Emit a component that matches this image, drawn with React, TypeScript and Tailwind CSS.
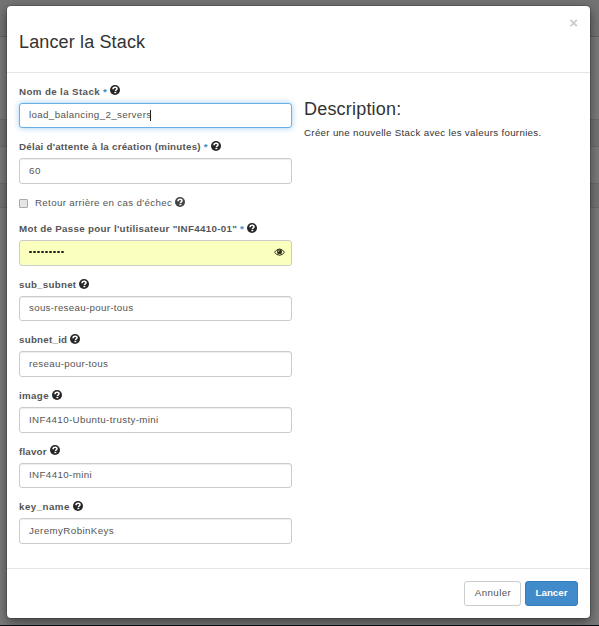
import type { ReactNode } from 'react';

function Help({ className = 'text-[#262626]' }: { className?: string }) {
  return (
    <svg viewBox="0 0 20 20" className={`inline-block h-[10px] w-[10px] shrink-0 ${className}`}>
      <circle cx="10" cy="10" r="10" fill="currentColor" />
      <path d="M6 8.400C6 5 7.800 4.500 10.200 4.500c2.400 0 3.800 1 3.800 3 0 2.400-3 2.200-3 4.500" fill="none" stroke="white" strokeWidth="3" />
      <rect x="8.800" y="13.600" width="3.800" height="2.800" fill="white" />
    </svg>
  );
}

function Eye() {
  return (
    <svg viewBox="0 0 22 16" className="h-[8px] w-[11px] text-[#2f2f22]">
      <path d="M1 8.500Q5.500 2 11 2T21 8.500Q16.500 14.500 11 14.500T1 8.500Z" fill="none" stroke="currentColor" strokeWidth="2" />
      <circle cx="11" cy="7.500" r="5" fill="currentColor" />
      <path d="M8.800 7.500Q8.800 5 11 5" fill="none" stroke="#faffbd" strokeWidth="1.400" />
    </svg>
  );
}

type FieldProps = {
  label: string;
  spacing: string;
  required?: boolean;
  height: string;
  boxHeight: string;
  box?: string;
  icon?: string;
  children: ReactNode;
};

function Field({
  label,
  spacing,
  required,
  height,
  boxHeight,
  box = 'border-[#cccccc] bg-white shadow-[inset_0_1px_1px_rgba(0,0,0,0.075)]',
  icon = 'mt-px ml-[3px]',
  children,
}: FieldProps) {
  return (
    <div className={height}>
      <div className="flex h-[18px] items-start whitespace-pre font-bold leading-[14px]">
        <span className={spacing}>{label}</span>
        {required && <span className="ml-[3px] text-[#428bca]">*</span>}
        <Help className={`text-[#262626] ${icon}`} />
      </div>
      <div className={`flex w-[273px] items-center rounded-[3px] border px-[9px] ${boxHeight} ${box}`}>{children}</div>
    </div>
  );
}

export default function App() {
  return (
    <div className="relative h-[626px] w-[599px] overflow-hidden bg-[#7b7b7b] font-['Liberation_Sans',Arial,sans-serif] text-[9.75px] text-[#555]">
      <div className="h-[37px] border-b border-[#626262] bg-[#747474]" />
      <div className="h-[82px]" />
      <div className="h-[28px] border-y border-[#6b6b6b] bg-[#747474]" />
      <div className="h-[36px]" />
      <div className="h-[25px] border-y border-[#6b6b6b] bg-[#747474]" />
      <div className="h-[417px]" />
      <div className="h-px bg-[#080b10]" />

      <div className="absolute left-[7px] top-[6px] flex h-[612px] w-[583px] flex-col rounded-[4px] bg-white shadow-[0_0_0_1px_rgba(0,0,0,0.15),0_4px_12px_rgba(0,0,0,0.5)]">
        <header className="flex h-[67px] shrink-0 justify-between border-b border-[#e5e5e5] pl-3 pr-[12px]">
          <h1 className="pt-[25px] text-[18px] leading-[22px] tracking-[0.14px] text-[#333]">Lancer la Stack</h1>
          <button className="mt-[9px] h-[16px] text-[15px] font-bold leading-[16px] text-[#cbcbcb]">×</button>
        </header>

        <main className="flex h-[496px] shrink-0 border-b border-[#e5e5e5] pl-3 pt-[12px]">
          <form className="w-[285px]">
            <Field label="Nom de la Stack" spacing="tracking-[0.38px]" required height="h-[55px]" boxHeight="h-[25px]" icon="ml-[3px]" box="border-[#66afe9] bg-white shadow-[0_0_6px_rgba(102,175,233,0.6)]">
              <span className="tracking-[0.36px]">load_balancing_2_servers</span>
              <span className="ml-[-1px] h-[11px] w-px bg-[#222]" />
            </Field>
            <Field label="Délai d'attente à la création (minutes)" spacing="tracking-[0.24px]" required height="h-[55px]" boxHeight="h-[26px]">
              <span className="tracking-[0.6px]">60</span>
            </Field>
            <div className="flex h-[27px] items-start leading-[14px]">
              <span className="mt-[4px] h-[9px] w-[9px] rounded-[1px] border border-[#aaa] bg-[#e5e5e5]" />
              <span className="ml-[7px] mt-px tracking-[0.33px]">Retour arrière en cas d'échec</span>
              <Help className="ml-[3px] mt-[2px] text-[#444]" />
            </div>
            <Field label={'Mot de Passe pour l\'utilisateur "INF4410-01"'} spacing="tracking-[0.31px]" required height="h-[56px]" boxHeight="h-[26px]" box="border-[#cccccc] bg-[#faffbd]">
              <span className="mt-[-2px] flex gap-[1.5px]">
                {Array.from({ length: 9 }, (_, i) => (
                  <span key={i} className="h-[2.5px] w-[2.5px] rounded-[1px] bg-[#222]" />
                ))}
              </span>
              <span className="ml-auto mr-[-3px] mt-[-2px]"><Eye /></span>
            </Field>
            <Field label="sub_subnet" spacing="tracking-[0.26px]" height="h-[55px]" boxHeight="h-[25px]">
              <span className="tracking-[0.3px]">sous-reseau-pour-tous</span>
            </Field>
            <Field label="subnet_id" spacing="tracking-[0.25px]" height="h-[56px]" boxHeight="h-[26px]">
              <span className="tracking-[0.31px]">reseau-pour-tous</span>
            </Field>
            <Field label="image" spacing="tracking-[0.35px]" height="h-[56px]" boxHeight="h-[26px]">
              <span className="tracking-[0.36px]">INF4410-Ubuntu-trusty-mini</span>
            </Field>
            <Field label="flavor" spacing="tracking-[0.18px]" height="h-[55px]" boxHeight="h-[25px]" icon="ml-[3px]">
              <span className="tracking-[0.38px]">INF4410-mini</span>
            </Field>
            <Field label="key_name" spacing="tracking-[0.46px]" height="h-[56px]" boxHeight="h-[26px]">
              <span className="tracking-[0.4px]">JeremyRobinKeys</span>
            </Field>
          </form>
          <section className="pt-[13px] text-[#333]">
            <h2 className="text-[18px] leading-[22px] tracking-[0.2px]">Description:</h2>
            <p className="mt-[6px] whitespace-nowrap leading-[14px] tracking-[0.3px]">Créer une nouvelle Stack avec les valeurs fournies.</p>
          </section>
        </main>

        <footer className="flex justify-end gap-[4px] pr-[12px] pt-[12px]">
          <button className="h-[25px] w-[57px] rounded-[3px] border border-[#ccc] bg-white pl-px tracking-[0.38px]">Annuler</button>
          <button className="h-[25px] w-[53px] rounded-[3px] border border-[#357ebd] bg-[#428bca] font-bold text-white">Lancer</button>
        </footer>
      </div>
    </div>
  );
}
